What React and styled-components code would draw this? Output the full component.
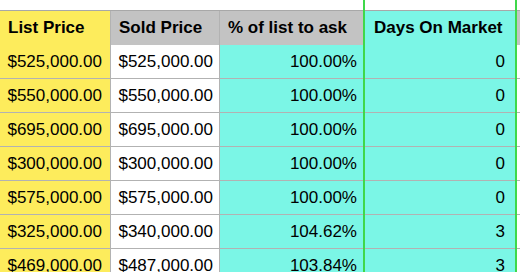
import React from "react"
import styled, { createGlobalStyle } from "styled-components"

const GlobalStyle = createGlobalStyle`
  body {
    margin: 0;
    background: #fff;
    font-family: "Liberation Sans", Arial, sans-serif;
    color: #000;
    overflow: hidden;
  }
`

const Page = styled.div`
  position: relative;
  width: 520px;
  height: 272px;
  padding-top: 10px;
  box-sizing: border-box;
  overflow: hidden;
`

const Sheet = styled.div`
  display: grid;
  grid-template-columns: 111px 109px 144px 153px 1fr;
  grid-auto-rows: 34px;
  border-top: 1px solid #a8a8a8;
`

const bg = {
  yellow: "#fdec5c",
  white: "#ffffff",
  cyan: "#7bf6e6",
  grey: "#c3c3c3",
}

const Cell = styled.div`
  display: flex;
  align-items: center;
  justify-content: ${p => (p.left ? "flex-start" : "flex-end")};
  padding: 0 ${p => p.pad || 7}px 0 ${p => (p.left ? 8 : 2)}px;
  background: ${p => bg[p.tone]};
  border-right: 1px solid #b2b2b2;
  border-bottom: 1px solid #b2b2b2;
  box-sizing: border-box;
  font-size: 17px;
  white-space: nowrap;
  overflow: hidden;
`

const HeadCell = styled(Cell)`
  height: 35px;
  font-size: 17px;
  font-weight: bold;
  border-bottom-color: #999;
`

const Guide = styled.div`
  position: absolute;
  top: 0;
  bottom: 0;
  left: ${p => p.x}px;
  width: ${p => p.w}px;
  background: #3fd84a;
`

const rows = [
  ["$525,000.00", "$525,000.00", "100.00%", "0"],
  ["$550,000.00", "$550,000.00", "100.00%", "0"],
  ["$695,000.00", "$695,000.00", "100.00%", "0"],
  ["$300,000.00", "$300,000.00", "100.00%", "0"],
  ["$575,000.00", "$575,000.00", "100.00%", "0"],
  ["$325,000.00", "$340,000.00", "104.62%", "3"],
  ["$469,000.00", "$487,000.00", "103.84%", "3"],
]

export default function App() {
  return (
    <Page>
      <GlobalStyle />
      <Sheet>
        <HeadCell left tone="yellow">List Price</HeadCell>
        <HeadCell left tone="grey">Sold Price</HeadCell>
        <HeadCell left tone="grey">% of list to ask</HeadCell>
        <HeadCell left tone="cyan" style={{ paddingLeft: 10 }}>Days On Market</HeadCell>
        <HeadCell tone="grey" />
        {rows.map((r, i) => (
          <React.Fragment key={i}>
            <Cell tone="yellow" pad={8}>{r[0]}</Cell>
            <Cell tone="white" pad={6}>{r[1]}</Cell>
            <Cell tone="cyan" pad={6}>{r[2]}</Cell>
            <Cell tone="cyan" pad={11}>{r[3]}</Cell>
            <Cell tone="white" />
          </React.Fragment>
        ))}
      </Sheet>
      <Guide x={363} w={2} />
      <Guide x={515} w={2} />
    </Page>
  )
}
